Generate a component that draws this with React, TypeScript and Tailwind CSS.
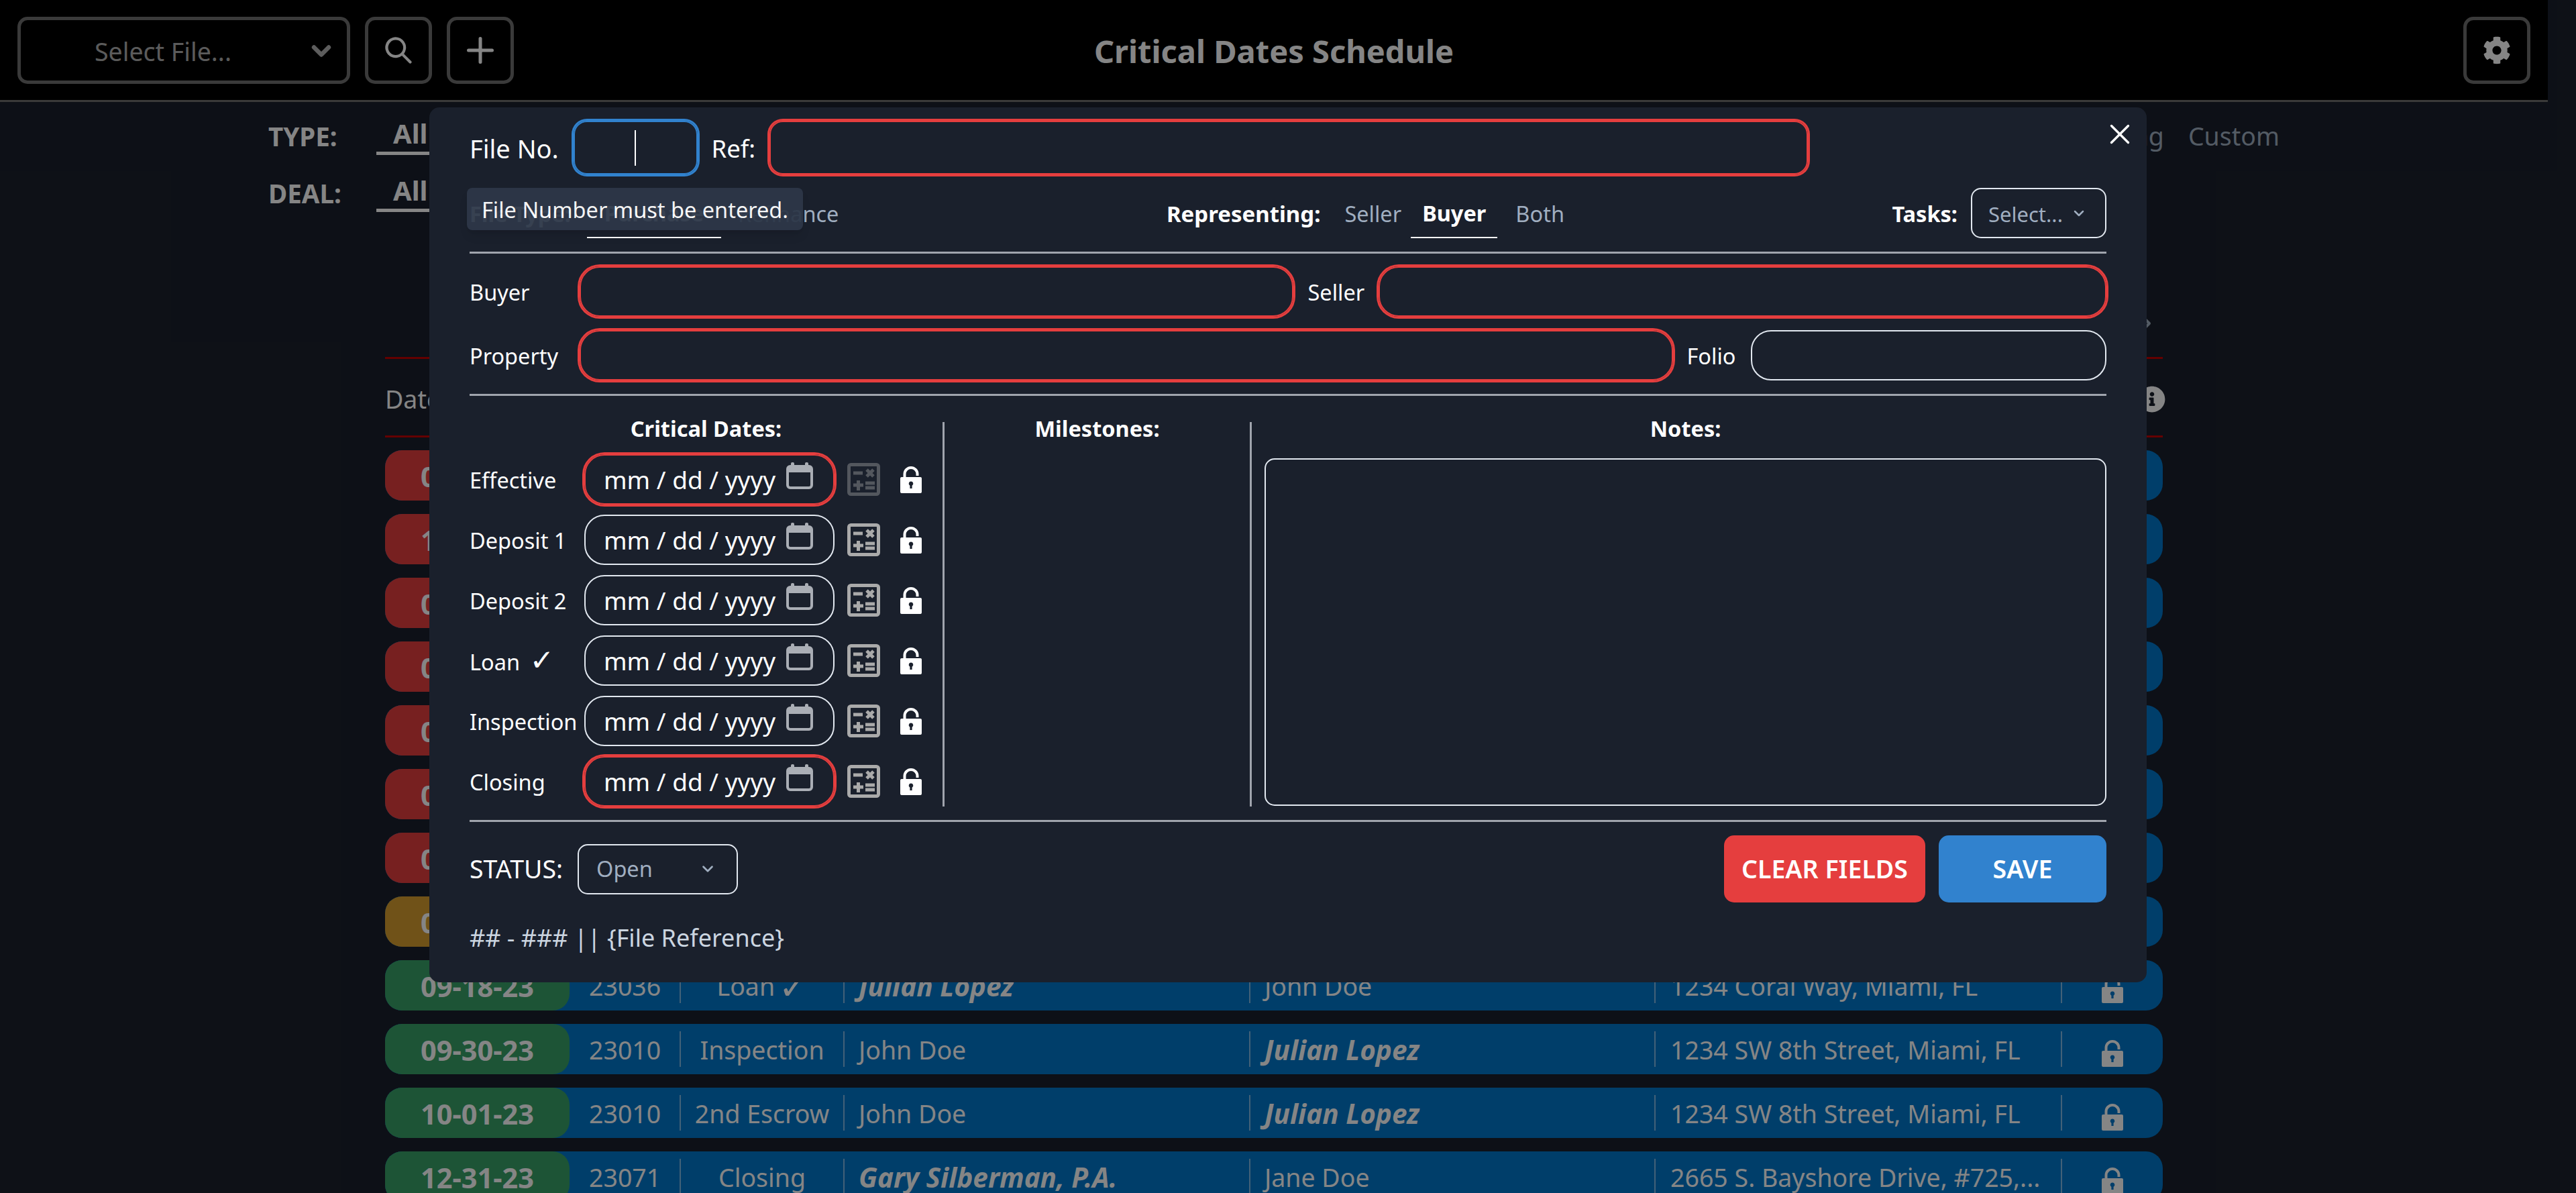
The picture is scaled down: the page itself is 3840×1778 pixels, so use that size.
import { ChevronDown, ChevronRight, X } from "lucide-react";
import { FaCog, FaInfoCircle } from "react-icons/fa";

const RED_FIELD = "border-[2.5px] border-[#E53E3E] shadow-[0_0_0_3px_#E53E3E]";
const PLAIN_FIELD = "border-[2.5px] border-[#E2E8F0]";

interface Row {
  date: string;
  color: string;
  file: string;
  type: string;
  buyer: string;
  seller: string;
  boldBuyer?: boolean;
  address: string;
}

const RED = "bg-[#E53E3E]";
const YELLOW = "bg-[#D69E2E]";
const GREEN = "bg-[#38A169]";

const rows: Row[] = [
  { date: "08-02-23", color: RED, file: "23010", type: "Effective", buyer: "John Doe", seller: "Julian Lopez", address: "1234 SW 8th Street, Miami, FL" },
  { date: "10-04-23", color: RED, file: "23036", type: "Closing", buyer: "Julian Lopez", boldBuyer: true, seller: "John Doe", address: "1234 Coral Way, Miami, FL" },
  { date: "08-12-23", color: RED, file: "23010", type: "Deposit 1", buyer: "John Doe", seller: "Julian Lopez", address: "1234 SW 8th Street, Miami, FL" },
  { date: "08-15-23", color: RED, file: "23036", type: "Deposit 1", buyer: "Julian Lopez", boldBuyer: true, seller: "John Doe", address: "1234 Coral Way, Miami, FL" },
  { date: "08-22-23", color: RED, file: "23071", type: "Effective", buyer: "Gary Silberman, P.A.", boldBuyer: true, seller: "Jane Doe", address: "2665 S. Bayshore Drive, #725,..." },
  { date: "08-28-23", color: RED, file: "23010", type: "Deposit 2", buyer: "John Doe", seller: "Julian Lopez", address: "1234 SW 8th Street, Miami, FL" },
  { date: "09-02-23", color: RED, file: "23036", type: "Inspection", buyer: "Julian Lopez", boldBuyer: true, seller: "John Doe", address: "1234 Coral Way, Miami, FL" },
  { date: "09-10-23", color: YELLOW, file: "23071", type: "Deposit 1", buyer: "Gary Silberman, P.A.", boldBuyer: true, seller: "Jane Doe", address: "2665 S. Bayshore Drive, #725,..." },
  { date: "09-18-23", color: GREEN, file: "23036", type: "Loan ✓", buyer: "Julian Lopez", boldBuyer: true, seller: "John Doe", address: "1234 Coral Way, Miami, FL" },
  { date: "09-30-23", color: GREEN, file: "23010", type: "Inspection", buyer: "John Doe", seller: "Julian Lopez", address: "1234 SW 8th Street, Miami, FL" },
  { date: "10-01-23", color: GREEN, file: "23010", type: "2nd Escrow", buyer: "John Doe", seller: "Julian Lopez", address: "1234 SW 8th Street, Miami, FL" },
  { date: "12-31-23", color: GREEN, file: "23071", type: "Closing", buyer: "Gary Silberman, P.A.", boldBuyer: true, seller: "Jane Doe", address: "2665 S. Bayshore Drive, #725,..." },
];

const dateFields = [
  { label: "Effective", invalid: true, dim: true },
  { label: "Deposit 1" },
  { label: "Deposit 2" },
  { label: "Loan ✓" },
  { label: "Inspection" },
  { label: "Closing", invalid: true },
];

// the check mark comes out small in the fallback font, so bump it
function withCheck(text: string) {
  if (!text.endsWith("✓")) return text;
  return (
    <>
      {text.slice(0, -1)}
      <span className="ml-[6px] text-[1.35em] leading-none">✓</span>
    </>
  );
}

function SearchIcon({ className }: { className?: string }) {
  return (
    <svg viewBox="0 0 24 24" className={className} fill="currentColor">
      <path d="M23.384,21.619,16.855,15.09a9.284,9.284,0,1,0-1.768,1.768l6.529,6.529a1.266,1.266,0,0,0,1.768,0A1.251,1.251,0,0,0,23.384,21.619ZM2.75,9.5a6.75,6.75,0,1,1,6.75,6.75A6.758,6.758,0,0,1,2.75,9.5Z" />
    </svg>
  );
}

function AddIcon({ className }: { className?: string }) {
  return (
    <svg viewBox="0 0 24 24" className={className} fill="currentColor">
      <path d="M0,12a1.5,1.5,0,0,0,1.5,1.5h8.75a.25.25,0,0,1,.25.25V22.5a1.5,1.5,0,0,0,3,0V13.75a.25.25,0,0,1,.25-.25H22.5a1.5,1.5,0,0,0,0-3H13.75a.25.25,0,0,1-.25-.25V1.5a1.5,1.5,0,0,0-3,0v8.75a.25.25,0,0,1-.25.25H1.5A1.5,1.5,0,0,0,0,12Z" />
    </svg>
  );
}

function LockOpenIcon({ className }: { className?: string }) {
  return (
    <svg viewBox="0 0 32 40" className={className} fill="none">
      <path d="M6.5 17v-5.5a9.5 9.5 0 0 1 19 0V14" stroke="currentColor" strokeWidth="4" />
      <path
        fillRule="evenodd"
        fill="currentColor"
        d="M2 16h28a2 2 0 0 1 2 2v20a2 2 0 0 1-2 2H2a2 2 0 0 1-2-2V18a2 2 0 0 1 2-2ZM16 22.5a3.3 3.3 0 0 0-1.6 6.2V33h3.2v-4.3A3.3 3.3 0 0 0 16 22.5Z"
      />
    </svg>
  );
}

function CalculatorIcon({ className }: { className?: string }) {
  return (
    <svg viewBox="0 0 49 49" className={className} fill="none" stroke="currentColor">
      <rect x="2.5" y="2.5" width="44" height="44" rx="3" strokeWidth="5" />
      <path d="M9 15h14M29 10l10 10M39 10 29 20M9 33h15M16.5 26v15M27 30h14M27 37h14" strokeWidth="5" />
    </svg>
  );
}

function CalendarIcon({ className }: { className?: string }) {
  return (
    <svg viewBox="0 0 40 40" className={className} fill="none">
      <rect x="2" y="6" width="36" height="32" rx="4" stroke="currentColor" strokeWidth="4" />
      <path d="M2 10a4 4 0 0 1 4-4h28a4 4 0 0 1 4 4v5H2Z" fill="currentColor" />
      <rect x="7" y="0" width="5" height="8" rx="2" fill="currentColor" />
      <rect x="28" y="0" width="5" height="8" rx="2" fill="currentColor" />
    </svg>
  );
}

function TableRow({ row }: { row: Row }) {
  const bold = "text-[40.5px] font-bold italic";
  return (
    <div className="flex h-[75px] shrink-0 items-center rounded-[25px] bg-[#0077CC] text-[37.5px] text-white">
      <div className={`flex h-full w-[275px] items-center justify-center rounded-[25px] pt-[4px] text-[41.5px] font-bold ${row.color}`}>
        {row.date}
      </div>
      <div className="flex h-[53px] w-[166px] items-center border-r-2 border-white/50 pt-[4px] pl-[29px]">{row.file}</div>
      <div className="flex h-[53px] w-[244px] items-center justify-center border-r-2 border-white/50 pt-[4px] whitespace-nowrap">{withCheck(row.type)}</div>
      <div className={`flex h-[53px] w-[605px] items-center border-r-2 border-white/50 pt-[4px] pl-[21px] ${row.boldBuyer ? bold : ""}`}>
        {row.buyer}
      </div>
      <div className={`flex h-[53px] w-[604px] items-center border-r-2 border-white/50 pt-[4px] pl-[21px] ${row.boldBuyer ? "" : bold}`}>
        {row.seller}
      </div>
      <div className="flex h-[53px] w-[606px] items-center border-r-2 border-white/50 pt-[4px] pl-[22px] whitespace-nowrap">{row.address}</div>
      <div className="flex flex-1 justify-center pt-[12px]">
        <LockOpenIcon className="h-[40px] w-[32px]" />
      </div>
    </div>
  );
}

function Page() {
  return (
    <div className="flex w-[3798px] flex-col text-white">
      <header className="grid h-[152px] shrink-0 grid-cols-[1fr_auto_1fr] items-center border-b-[3px] border-[#707070] bg-black px-[26px]">
        <div className="flex gap-[22px]">
          <div className="flex h-[100px] w-[496px] items-center rounded-[15px] border-[5px] border-[#707070] pr-[16px] pl-[110px] text-[37.5px] text-white/70">
            <span className="flex-1 pt-[6px]">Select File...</span>
            <ChevronDown className="mt-[2px] size-[44px]" strokeWidth={3.5} />
          </div>
          <div className="flex size-[100px] items-center justify-center rounded-[15px] border-[5px] border-[#707070]">
            <SearchIcon className="size-[40px]" />
          </div>
          <div className="flex size-[100px] items-center justify-center rounded-[15px] border-[5px] border-[#707070]">
            <AddIcon className="size-[40px]" />
          </div>
        </div>
        <h1 className="pt-[4px] text-[47px] font-bold">Critical Dates Schedule</h1>
        <div className="flex size-[100px] items-center justify-center justify-self-end rounded-[15px] border-[5px] border-[#707070]">
          <FaCog className="size-[42px]" />
        </div>
      </header>

      <div className="mx-auto mt-[9px] flex w-[2998px] flex-col gap-[15px] text-[37.5px]">
        <div className="flex justify-between">
          <div className="flex items-center">
            <span className="w-[161px] pt-[14px] text-[38.5px] leading-[40px] font-bold">TYPE:</span>
            <span className="flex h-[70px] items-center border-b-[5px] border-white px-[25px] pt-[10px] text-[40px] leading-[40px] font-bold">All</span>
          </div>
          <div className="flex h-[70px] items-center gap-[36px] pt-[14px] leading-[40px] text-[#A0AEC0]">
            <span>Closing</span>
            <span>Custom</span>
          </div>
        </div>
        <div className="flex items-center">
          <span className="w-[161px] pt-[14px] text-[38.5px] leading-[40px] font-bold">DEAL:</span>
          <span className="flex h-[70px] items-center border-b-[5px] border-white px-[25px] pt-[10px] text-[40px] leading-[40px] font-bold">All</span>
        </div>
      </div>

      <div className="mx-auto flex w-[2650px] flex-col">
        <div className="mt-[150px] flex justify-end pr-[8px]">
          <ChevronRight className="size-[32px] text-[#A0AEC0]" strokeWidth={3} />
        </div>
        <div className="mt-[34px] flex h-[120px] items-center justify-between border-y-[3px] border-[#C00000] pt-[6px] text-[37.5px]">
          <span>Date</span>
          <FaInfoCircle className="-mr-[4px] size-[40px]" />
        </div>
        <div className="mt-[19px] flex flex-col gap-[20px]">
          {rows.map((row, index) => (
            <TableRow key={index} row={row} />
          ))}
        </div>
      </div>
    </div>
  );
}

function DateField({ label, invalid, dim }: { label: string; invalid?: boolean; dim?: boolean }) {
  return (
    <div className="flex h-[75px] items-center">
      <span className="w-[171px] pt-[3px] text-[32.5px] whitespace-nowrap">{withCheck(label)}</span>
      <div className={`flex h-[75px] w-[373px] items-center rounded-[30px] pl-[27px] text-[37px] ${invalid ? RED_FIELD : PLAIN_FIELD}`}>
        <span className="w-[272px] whitespace-nowrap">mm / dd / yyyy</span>
        <CalendarIcon className="mb-[12px] size-[40px] text-[#AAAEB5]" />
      </div>
      <CalculatorIcon className={`ml-[19px] size-[49px] text-[#AAAAAA] ${dim ? "opacity-40" : ""}`} />
      <LockOpenIcon className="ml-[30px] h-[40px] w-[32px]" />
    </div>
  );
}

function Modal() {
  return (
    <div className="absolute top-[160px] left-[640px] h-[1304px] w-[2560px] rounded-[15px] bg-[#1A202C] px-[60px] pt-[20px] text-white">
      <div className="absolute top-[15px] right-[15px]">
        <X className="size-[50px]" strokeWidth={1.6} />
      </div>

      <div className="flex h-[80px] items-center">
        <span className="w-[154.5px] pt-[3px] text-[38px]">File No.</span>
        <div className="flex h-[80px] w-[185px] items-center justify-center rounded-[20px] border-[2.5px] border-[#3182CE] shadow-[0_0_0_3px_#3182CE]">
          <span className="h-[53px] w-[2px] bg-white" />
        </div>
        <span className="ml-[21px] w-[86px] pt-[3px] text-[36.5px]">Ref:</span>
        <input className={`h-[80px] w-[1548px] rounded-[20px] bg-transparent ${RED_FIELD}`} />
      </div>

      <div className="mt-[20px] flex h-[75px] items-center justify-between text-[32.5px]">
        <div className="flex h-[75px] items-center">
          <span className="w-[175px] pt-[3px] font-bold">File Type:</span>
          <span className="flex h-[75px] w-[200px] items-center justify-center border-b-[2.5px] border-white pt-[3px] font-bold">Purchase</span>
          <span className="pt-[3px] pr-[20px] pl-[25px] text-[#A0AEC0]">Refinance</span>
        </div>
        <div className="flex h-[75px] items-center">
          <span className="pt-[3px] text-[33px] font-bold">Representing:</span>
          <span className="ml-[26px] pt-[3px] pr-[14px] pl-[10px] text-[#A0AEC0]">Seller</span>
          <span className="flex h-[75px] items-center border-b-[2.5px] border-white px-[17px] pt-[3px] font-bold">Buyer</span>
          <span className="pt-[3px] pr-[20px] pl-[27px] text-[#A0AEC0]">Both</span>
        </div>
        <div className="flex items-center">
          <span className="pt-[3px] font-bold">Tasks:</span>
          <div className="ml-[20px] flex h-[75px] w-[202px] items-center gap-[12px] rounded-[15px] border-[2.5px] border-[#E2E8F0] pl-[24px] text-[31px] text-[#A0AEC0]">
            <span className="pt-[3px]">Select...</span>
            <ChevronDown className="size-[24px]" strokeWidth={2.5} />
          </div>
        </div>
      </div>

      <div className="absolute top-[120px] left-[56px] flex h-[63px] w-[501px] items-center justify-center rounded-[8px] bg-[#2D3748] pt-[3px] text-[32.5px] whitespace-nowrap opacity-95 shadow-lg">
        File Number must be entered.
      </div>

      <div className="mt-[20px] h-[3px] bg-[#A0A4AD]" />

      <div className="mt-[19px] flex h-[75px] items-center text-[32.5px]">
        <span className="w-[163.5px] pt-[3px]">Buyer</span>
        <input className={`h-[75px] w-[1064px] rounded-[30px] bg-transparent ${RED_FIELD}`} />
        <span className="ml-[22px] w-[105px] pt-[3px]">Seller</span>
        <input className={`h-[75px] min-w-0 flex-1 rounded-[30px] bg-transparent ${RED_FIELD}`} />
      </div>
      <div className="mt-[20px] flex h-[75px] items-center text-[32.5px]">
        <span className="w-[163.5px] pt-[3px]">Property</span>
        <input className={`h-[75px] w-[1630px] rounded-[30px] bg-transparent ${RED_FIELD}`} />
        <span className="ml-[21px] w-[95px] pt-[3px]">Folio</span>
        <input className={`h-[75px] min-w-0 flex-1 rounded-[30px] bg-transparent ${PLAIN_FIELD}`} />
      </div>

      <div className="mt-[20px] h-[3px] bg-[#A0A4AD]" />

      <div className="mt-[39px] flex h-[573px]">
        <div className="flex w-[708px] flex-col border-r-[3px] border-[#A0A4AD]">
          <h2 className="h-[48px] text-center text-[32.5px] leading-[20px] font-bold">Critical Dates:</h2>
          <div className="flex flex-col gap-[15px]">
            {dateFields.map((field) => (
              <DateField key={field.label} {...field} />
            ))}
          </div>
        </div>
        <div className="w-[458px] border-r-[3px] border-[#A0A4AD]">
          <h2 className="text-center text-[32.5px] leading-[20px] font-bold">Milestones:</h2>
        </div>
        <div className="flex flex-1 flex-col pl-[19px]">
          <h2 className="h-[54px] text-center text-[32.5px] leading-[20px] font-bold">Notes:</h2>
          <textarea className="h-[518px] w-full resize-none rounded-[15px] border-[2.5px] border-[#E2E8F0] bg-transparent" />
        </div>
      </div>

      <div className="mt-[20px] h-[3px] bg-[#A0A4AD]" />

      <div className="mt-[20px] flex h-[100px] items-center">
        <span className="w-[161px] text-[37.5px]">STATUS:</span>
        <div className="flex h-[75px] w-[239px] items-center justify-between rounded-[15px] border-[2.5px] border-[#E2E8F0] pr-[30px] pl-[26px] text-[32.5px] text-[#A0AEC0]">
          <span>Open</span>
          <ChevronDown className="size-[26px]" strokeWidth={2.5} />
        </div>
        <button className="ml-auto h-[100px] w-[300px] rounded-[15px] bg-[#E53E3E] text-[37.5px] font-semibold">CLEAR FIELDS</button>
        <button className="ml-[20px] h-[100px] w-[250px] rounded-[15px] bg-[#3182CE] text-[37.5px] font-semibold">SAVE</button>
      </div>

      <p className="mt-[30px] text-[36px] leading-[45px] text-[#CBD5E0]">## - ### || {"{File Reference}"}</p>
    </div>
  );
}

export default function App() {
  return (
    <div className="relative flex h-[1778px] w-[3840px] overflow-hidden bg-[#1A202C] font-['Noto_Sans','DejaVu_Sans',sans-serif]">
      <Page />
      <div className="absolute inset-0 bg-black/48" />
      <Modal />
    </div>
  );
}
